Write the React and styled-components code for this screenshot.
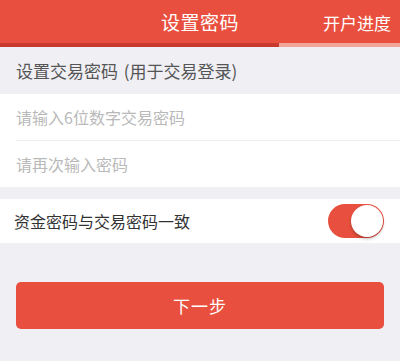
import React, { useState } from 'react'
import styled, { createGlobalStyle } from 'styled-components'

const GlobalStyle = createGlobalStyle`
  body {
    margin: 0;
    background: #efeff4;
    font-family: 'Noto Sans CJK SC', 'Noto Sans', sans-serif;
  }
`

const App = () => {
  const [same, setSame] = useState(true)

  return (
    <Page>
      <GlobalStyle />
      <Header>
        <HeaderTitle>设置密码</HeaderTitle>
        <HeaderLink>开户进度</HeaderLink>
      </Header>
      <Progress>
        <ProgressDone />
        <ProgressLeft />
      </Progress>
      <SectionLabel>设置交易密码 (用于交易登录)</SectionLabel>
      <Group>
        <Field placeholder="请输入6位数字交易密码" type="password" />
        <Divider />
        <Field placeholder="请再次输入密码" type="password" />
      </Group>
      <ToggleRow>
        <RowText>资金密码与交易密码一致</RowText>
        <Switch $on={same} onClick={() => setSame(!same)}>
          <Knob $on={same} />
        </Switch>
      </ToggleRow>
      <NextButton>下一步</NextButton>
    </Page>
  )
}

const Page = styled.div`
  width: 400px;
  height: 361px;
  background: #efeff4;
  overflow: hidden;
`

const Header = styled.div`
  height: 43px;
  background: #e94f3e;
  display: flex;
  align-items: center;
  justify-content: center;
  position: relative;
`

const HeaderTitle = styled.div`
  color: #fff;
  font-size: 19px;
  letter-spacing: 0.5px;
`

const HeaderLink = styled.div`
  position: absolute;
  right: 9px;
  top: 50%;
  transform: translateY(-50%);
  color: #fff;
  font-size: 17px;
`

const Progress = styled.div`
  display: flex;
  height: 4px;
`

const ProgressDone = styled.div`
  width: 279px;
  background: #c93a2e;
`

const ProgressLeft = styled.div`
  flex: 1;
  background: #f3a49a;
`

const SectionLabel = styled.div`
  height: 47px;
  display: flex;
  align-items: center;
  padding-left: 16px;
  font-size: 17px;
  color: #555;
  word-spacing: 2px;
`

const Group = styled.div`
  background: #fff;
  display: flex;
  flex-direction: column;
`

const Field = styled.input`
  height: 46px;
  border: none;
  outline: none;
  padding: 0 16px;
  font-size: 16px;
  font-family: inherit;
  color: #333;
  background: transparent;
  &::placeholder {
    color: #b9b9b9;
  }
`

const Divider = styled.div`
  height: 1px;
  margin-left: 16px;
  background: #ececec;
`

const ToggleRow = styled.div`
  margin-top: 12px;
  height: 44px;
  background: #fff;
  display: flex;
  align-items: center;
  justify-content: space-between;
  padding: 0 16px 0 14px;
`

const RowText = styled.div`
  font-size: 16px;
  color: #333;
`

const Switch = styled.div`
  width: 56px;
  height: 34px;
  border-radius: 17px;
  background: ${(p) => (p.$on ? '#e94f3e' : '#e5e5ea')};
  position: relative;
  cursor: pointer;
`

const Knob = styled.div`
  position: absolute;
  top: 1px;
  left: ${(p) => (p.$on ? '23px' : '1px')};
  width: 32px;
  height: 32px;
  border-radius: 50%;
  background: #fff;
  box-shadow: 0 2px 3px rgba(0, 0, 0, 0.25);
`

const NextButton = styled.button`
  display: block;
  margin: 39px 16px 0;
  width: 368px;
  height: 47px;
  border: none;
  border-radius: 5px;
  background: #e94f3e;
  color: #fff;
  font-size: 17px;
  font-family: inherit;
  letter-spacing: 1px;
`

export default App
